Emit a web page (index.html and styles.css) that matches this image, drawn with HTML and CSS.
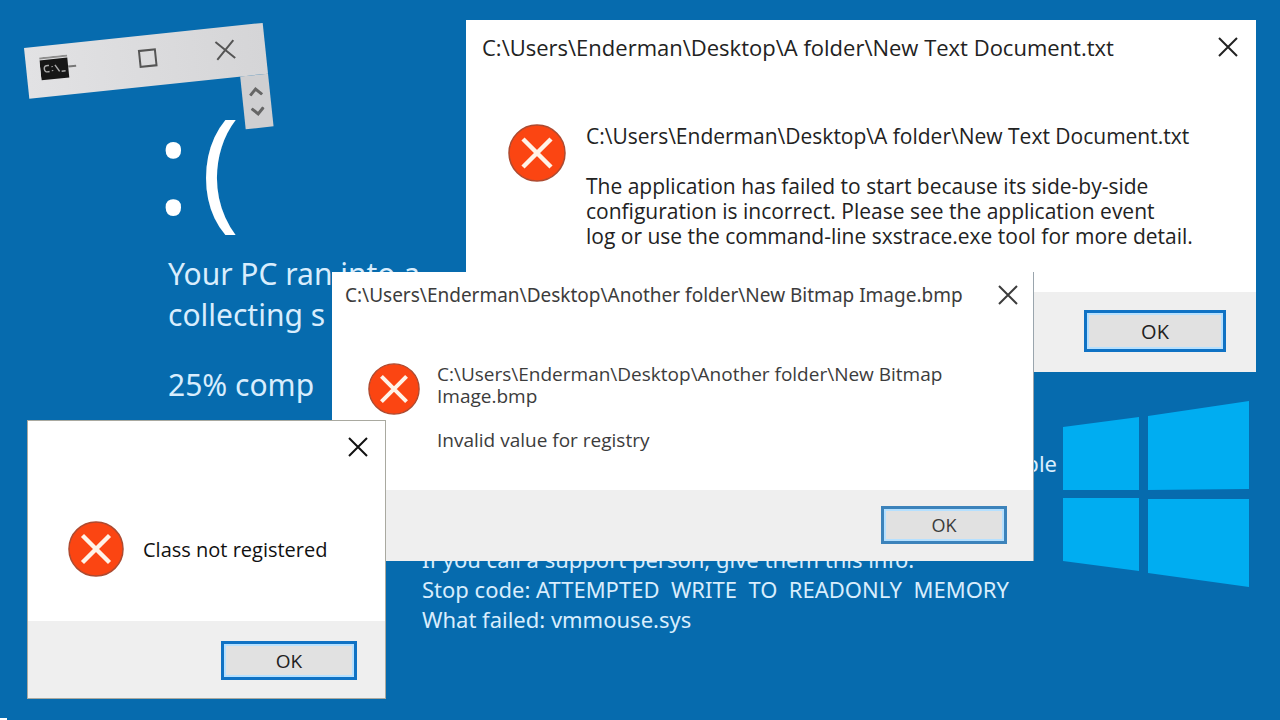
FILE: index.html
```html
<!DOCTYPE html>
<html lang="en">
  <head>
    <meta charset="UTF-8" />
    <meta name="viewport" content="width=device-width, initial-scale=1.0" />
    <title>Your PC ran into a problem</title>
    <link rel="stylesheet" href="styles.css">
  </head>
  <body>
    <svg class="defs" aria-hidden="true">
      <symbol id="icon-error" viewBox="0 0 58 58">
        <circle cx="29" cy="29" r="28" fill="#fb4512" stroke="#ad4a30" stroke-width="1.5" />
        <path d="M15 15L43 43M43 15L15 43" stroke="#fff3e8" stroke-width="4.5" />
      </symbol>
      <symbol id="icon-close" viewBox="0 0 20 20">
        <path d="M1 1L19 19M19 1L1 19" stroke="currentColor" stroke-width="2" />
      </symbol>
    </svg>

    <main class="crash">
      <h1 class="face"><span>:</span><span>(</span></h1>
      <p class="message">Your PC ran into a<br>collecting s</p>
      <p class="message progress">25% comp</p>
      <p class="more">possible</p>
      <div class="details">
        <p>If you call a support person, give them this info:</p>
        <p>Stop code: ATTEMPTED&nbsp; WRITE&nbsp; TO&nbsp; READONLY&nbsp; MEMORY</p>
        <p>What failed: vmmouse.sys</p>
      </div>
    </main>

    <svg class="logo" viewBox="0 0 186 186" role="img" aria-label="Windows">
      <path d="M0 26L76 16V89H0ZM85 15L186 0V88L85 89ZM0 97H76V170L0 160ZM85 98H186V186L85 172Z" fill="#00adf1" />
    </svg>

    <div class="fragment">
      <div class="fragment-bar">
        <svg class="console" viewBox="0 0 40 24">
          <path d="M0 1H28" stroke="#8d8d8d" stroke-width="2" />
          <path d="M0 3H28V23H0Z" fill="#161616" />
          <path d="M9 9Q4 8 4 12Q4 16 9 15M12 10V11M12 14V15M15 9L19 16M21 16H25" fill="none" stroke="#aaa" stroke-width="1.5" />
          <path d="M28 12H36" stroke="#777" stroke-width="2" />
        </svg>
        <button class="icon-btn" aria-label="Maximize">
          <svg viewBox="0 0 20 20"><path d="M2 2H18V18H2Z" fill="none" stroke="currentColor" stroke-width="2" /></svg>
        </button>
        <button class="icon-btn" aria-label="Close">
          <svg><use href="#icon-close" /></svg>
        </button>
      </div>
      <div class="fragment-scroll">
        <button class="scroll-btn" aria-label="Scroll up">
          <svg viewBox="0 0 14 10"><path d="M1 9L7 3L13 9" fill="none" stroke="currentColor" stroke-width="3" /></svg>
        </button>
        <button class="scroll-btn" aria-label="Scroll down">
          <svg viewBox="0 0 14 10"><path d="M1 1L7 7L13 1" fill="none" stroke="currentColor" stroke-width="3" /></svg>
        </button>
      </div>
    </div>

    <section class="dialog dialog-text" role="dialog" aria-labelledby="title-text">
      <header class="titlebar">
        <h2 id="title-text">C:\Users\Enderman\Desktop\A folder\New Text Document.txt</h2>
        <button class="icon-btn" aria-label="Close"><svg><use href="#icon-close" /></svg></button>
      </header>
      <div class="content">
        <svg class="error"><use href="#icon-error" /></svg>
        <div class="text">
          <p>C:\Users\Enderman\Desktop\A folder\New Text Document.txt</p>
          <p>The application has failed to start because its side-by-side<br>configuration is incorrect. Please see the application event<br>log or use the command-line sxstrace.exe tool for more detail.</p>
        </div>
      </div>
      <footer class="actions"><button class="ok">OK</button></footer>
    </section>

    <section class="dialog dialog-bitmap" role="dialog" aria-labelledby="title-bitmap">
      <header class="titlebar">
        <h2 id="title-bitmap">C:\Users\Enderman\Desktop\Another folder\New Bitmap Image.bmp</h2>
        <button class="icon-btn" aria-label="Close"><svg><use href="#icon-close" /></svg></button>
      </header>
      <div class="content">
        <svg class="error"><use href="#icon-error" /></svg>
        <div class="text">
          <p>C:\Users\Enderman\Desktop\Another folder\New Bitmap<br>Image.bmp</p>
          <p>Invalid value for registry</p>
        </div>
      </div>
      <footer class="actions"><button class="ok">OK</button></footer>
    </section>

    <section class="dialog dialog-class" role="dialog" aria-label="Class not registered">
      <header class="titlebar">
        <button class="icon-btn" aria-label="Close"><svg><use href="#icon-close" /></svg></button>
      </header>
      <div class="content">
        <svg class="error"><use href="#icon-error" /></svg>
        <div class="text">
          <p>Class not registered</p>
        </div>
      </div>
      <footer class="actions"><button class="ok">OK</button></footer>
    </section>
  </body>
</html>
```
FILE: styles.css
```css
* {
  box-sizing: border-box;
}
body {
  position: relative;
  min-height: 100vh;
  margin: 0;
  background-color: #066bae;
  font-family: "Open Sans", "Noto Sans", sans-serif;
  overflow: hidden;
}
body::after {
  content: "";
  position: absolute;
  left: 0;
  bottom: 0;
  width: 7px;
  height: 2px;
  background-color: #fff;
}
h1,
h2,
p {
  margin: 0;
  font-weight: 400;
}
button {
  padding: 0;
  font-family: inherit;
  cursor: pointer;
}
.defs {
  position: absolute;
  width: 0;
  height: 0;
}

/* crash screen */
.crash {
  padding: 95px 0 0 168px;
  color: #d8edfd;
  font-family: "Noto Sans", "Open Sans", sans-serif;
}
.face {
  display: flex;
  gap: 10px;
  margin-left: -12px;
  height: 158px;
  color: #fff;
  font-family: "Open Sans", sans-serif;
  font-size: 132px;
  line-height: 136px;
}
.message {
  font-size: 30px;
  line-height: 41px;
}
.progress {
  margin-top: 29px;
}
.more {
  width: 889px;
  margin-top: 43px;
  font-size: 22px;
  line-height: 30px;
  text-align: right;
}
.details {
  margin: 66px 0 0 254px;
  font-size: 22px;
  font-weight: 300;
  line-height: 30px;
}
.logo {
  position: absolute;
  left: 1063px;
  top: 401px;
  width: 186px;
}

/* torn off piece of a console window */
.fragment {
  position: absolute;
  left: 24px;
  top: 48px;
  width: 240px;
  transform: rotate(-6deg);
  transform-origin: 0 0;
  color: #555;
}
.fragment-bar {
  display: flex;
  align-items: center;
  justify-content: space-between;
  height: 51px;
  padding: 0 30px 6px 14px;
  background: linear-gradient(90deg, #e2e2e4, #d5d5d7);
}
.console {
  width: 40px;
  height: 24px;
}
.fragment-bar .icon-btn {
  margin-left: 0;
}
.fragment-scroll {
  display: flex;
  flex-direction: column;
  justify-content: space-evenly;
  width: 28px;
  height: 53px;
  margin-left: auto;
  background-color: #cfcfd1;
}
.scroll-btn {
  border: none;
  background: none;
  color: #666;
  line-height: 0;
}
.scroll-btn svg {
  width: 14px;
  height: 10px;
}

/* dialogs */
.dialog {
  position: absolute;
  display: flex;
  flex-direction: column;
  background-color: #fff;
  color: #222;
}
.titlebar {
  display: flex;
  align-items: center;
  justify-content: space-between;
}
.icon-btn {
  width: 20px;
  height: 20px;
  margin-left: auto;
  border: none;
  background: none;
  color: inherit;
  line-height: 0;
}
.icon-btn svg {
  width: 20px;
  height: 20px;
}
.content {
  display: flex;
  flex: 1;
  align-items: flex-start;
}
.error {
  flex: none;
}
.actions {
  display: flex;
  justify-content: flex-end;
  background-color: #efefef;
}
.ok {
  border: 3px solid #0f72c4;
  background-color: #e1e1e1;
  box-shadow: inset 0 0 0 2px #b5e0ff;
  color: #222;
}

.dialog-text {
  left: 466px;
  top: 20px;
  width: 790px;
  height: 352px;
  font-size: 21px;
  line-height: 25px;
}
.dialog-text .titlebar {
  padding: 13px 18px 0 16px;
}
.dialog-text h2 {
  font-size: 22px;
  line-height: 28px;
}
.dialog-text .content {
  padding: 63px 0 0 42px;
  gap: 20px;
}
.dialog-text .error {
  width: 58px;
  height: 58px;
}
.dialog-text p + p {
  margin-top: 25px;
}
.dialog-text .actions {
  height: 80px;
  padding: 18px 30px 20px;
}
.dialog-text .ok {
  width: 142px;
  font-size: 20px;
}

.dialog-bitmap {
  left: 332px;
  top: 272px;
  width: 702px;
  height: 289px;
  border-right: 1px solid #9aa5ad;
  color: #3c3c3c;
  font-size: 19px;
  line-height: 22px;
}
.dialog-bitmap .titlebar {
  padding: 9px 15px 0 13px;
}
.dialog-bitmap h2 {
  font-family: "Noto Sans", "Open Sans", sans-serif;
  font-size: 19px;
  line-height: 28px;
}
.dialog-bitmap .content {
  padding: 54px 0 0 36px;
  gap: 17px;
}
.dialog-bitmap .error {
  width: 52px;
  height: 52px;
}
.dialog-bitmap p + p {
  margin-top: 22px;
}
.dialog-bitmap .actions {
  height: 71px;
  padding: 16px 26px 17px;
}
.dialog-bitmap .ok {
  width: 126px;
  border-color: #3c83bb;
  color: #3c3c3c;
  font-size: 18px;
}

.dialog-class {
  left: 27px;
  top: 420px;
  width: 359px;
  height: 279px;
  border: 1px solid #a9a9a0;
  color: #111;
  font-size: 20px;
  line-height: 24px;
}
.dialog-class .titlebar {
  padding: 16px 17px 0;
}
.dialog-class .content {
  padding: 64px 0 0 40px;
  gap: 19px;
}
.dialog-class .error {
  width: 56px;
  height: 56px;
}
.dialog-class .text {
  padding-top: 17px;
}
.dialog-class .actions {
  height: 77px;
  padding: 20px 28px 18px;
}
.dialog-class .ok {
  width: 136px;
  font-size: 19px;
}
```
